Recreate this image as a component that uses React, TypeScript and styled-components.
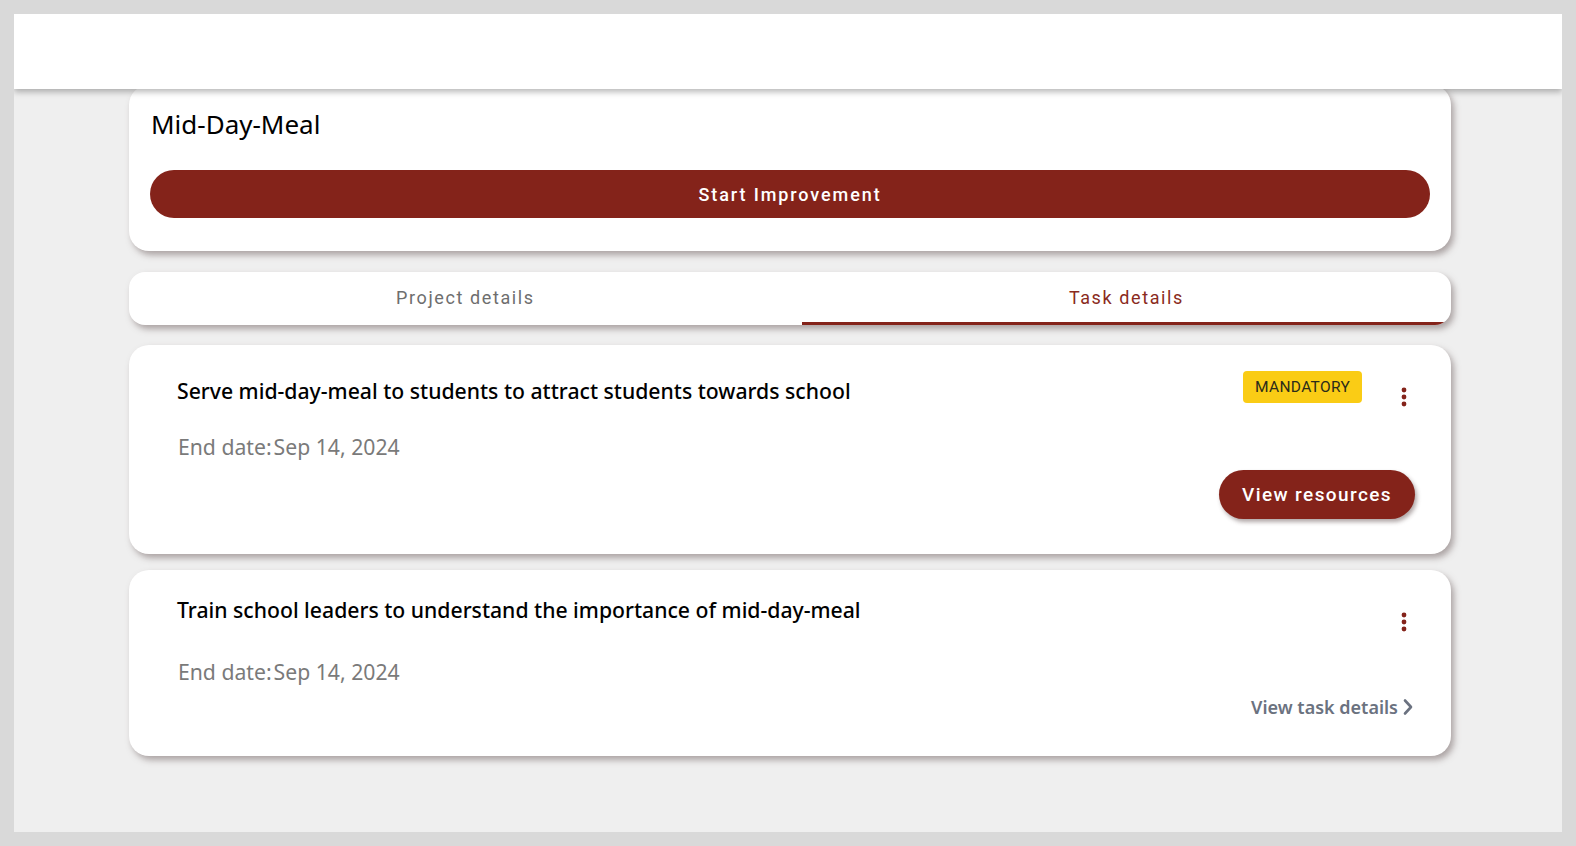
import React from "react";
import styled, { createGlobalStyle } from "styled-components";

const BRAND = "#84231a";

const Global = createGlobalStyle`
  html, body { margin: 0; padding: 0; }
  body {
    background: #d9d9d9;
    font-family: "Noto Sans", "Open Sans", sans-serif;
  }
  * { box-sizing: border-box; }
`;

const Frame = styled.div`
  margin: 14px;
  width: 1548px;
  height: 818px;
  background: #efefef;
  overflow: hidden;
  display: flex;
  flex-direction: column;
`;

const Header = styled.header`
  position: relative;
  z-index: 2;
  height: 75px;
  flex: none;
  background: #ffffff;
  box-shadow: 0 3px 6px rgba(0, 0, 0, 0.28);
`;

const Main = styled.main`
  position: relative;
  z-index: 1;
  width: 1322px;
  margin: -4px 0 0 115px;
  display: flex;
  flex-direction: column;
`;

const Card = styled.section<{ $radius?: number }>`
  background: #ffffff;
  border-radius: ${(p) => p.$radius ?? 20}px;
  box-shadow: 3px 4px 6px rgba(105, 90, 90, 0.5);
`;

const ProjectCard = styled(Card)`
  padding: 21px 21px 33px 21px;
  display: flex;
  flex-direction: column;
`;

const ProjectTitle = styled.h1`
  margin: 0 0 0 1px;
  font-family: "Noto Sans", sans-serif;
  font-weight: 400;
  font-size: 26px;
  line-height: 36px;
  color: #000;
`;

const PrimaryButton = styled.button`
  margin-top: 28px;
  height: 48px;
  width: 100%;
  border: none;
  border-radius: 24px;
  background: ${BRAND};
  color: #fff;
  font-family: Roboto, "Liberation Sans", sans-serif;
  font-weight: 500;
  font-size: 18px;
  letter-spacing: 1.9px;
  cursor: pointer;
`;

const TabBar = styled(Card)`
  margin-top: 21px;
  height: 53px;
  display: flex;
  overflow: hidden;
  border-radius: 16px;
`;

const Tab = styled.button<{ $active?: boolean }>`
  flex: 1 1 auto;
  padding: 0;
  border: none;
  background: transparent;
  font-family: Roboto, "Liberation Sans", sans-serif;
  font-size: 18px;
  letter-spacing: 1.6px;
  color: ${(p) => (p.$active ? "#8a2a20" : "#6e6e6e")};
  border-bottom: 3px solid ${(p) => (p.$active ? BRAND : "transparent")};
  cursor: pointer;
`;

const TaskCard = styled(Card)`
  margin-top: 20px;
  padding: 25px 35px 35px 48px;
  display: flex;
  flex-direction: column;
  & + & {
    margin-top: 16px;
  }
`;

const TaskHead = styled.div`
  height: 62px;
  display: flex;
  align-items: flex-start;
`;

const TaskTitle = styled.h2<{ $offset: number }>`
  flex: 1;
  margin: ${(p) => p.$offset}px 0 0 0;
  font-family: "Noto Sans", sans-serif;
  font-weight: 500;
  font-size: 21.2px;
  line-height: 30px;
  color: #000;
`;

const Badge = styled.span`
  margin-top: 1px;
  height: 32px;
  padding: 0 12px;
  display: inline-flex;
  align-items: center;
  background: #facc15;
  border-radius: 4px;
  font-family: Roboto, "Liberation Sans", sans-serif;
  font-size: 15.5px;
  color: #2b2b1a;
  letter-spacing: 0.3px;
`;

const Kebab = styled.button`
  margin: 15px 0 0 30px;
  width: 24px;
  height: 24px;
  padding: 0;
  border: none;
  background: transparent;
  display: flex;
  align-items: center;
  justify-content: center;
  color: ${BRAND};
  cursor: pointer;
`;

const DateLine = styled.p`
  margin: 0 0 0 1px;
  font-family: "Noto Sans", sans-serif;
  font-size: 21.2px;
  line-height: 30px;
  color: #7a7a7a;
`;

const DateLabel = styled.span`
  margin-right: 2px;
`;

const Footer = styled.div`
  margin-top: 8px;
  display: flex;
  justify-content: flex-end;
  align-items: flex-start;
`;

const ResourceButton = styled.button`
  height: 49px;
  width: 196px;
  margin-right: 1px;
  border: none;
  border-radius: 25px;
  background: ${BRAND};
  color: #fff;
  font-family: Roboto, "Liberation Sans", sans-serif;
  font-weight: 500;
  font-size: 19px;
  letter-spacing: 1.4px;
  box-shadow: 2px 3px 4px rgba(80, 60, 60, 0.45);
  cursor: pointer;
`;

const DetailsLink = styled.a`
  display: inline-flex;
  align-items: center;
  gap: 5px;
  margin: 0 3px 2px 0;
  font-family: "Noto Sans", sans-serif;
  font-weight: 600;
  font-size: 18px;
  line-height: 24px;
  color: #6b7280;
  text-decoration: none;
  cursor: pointer;
`;

const Dots = () => (
  <svg width="6" height="20" viewBox="0 0 6 20" fill="currentColor">
    <circle cx="3" cy="3" r="2.4" />
    <circle cx="3" cy="10" r="2.4" />
    <circle cx="3" cy="17" r="2.4" />
  </svg>
);

const Chevron = () => (
  <svg width="10" height="18" viewBox="0 0 10 18" fill="none" stroke="currentColor" strokeWidth="2.6" strokeLinecap="round" strokeLinejoin="round">
    <path d="M2 2.5 L8 9 L2 15.5" />
  </svg>
);

type Task = {
  title: string;
  date: string;
  mandatory?: boolean;
  action: "resources" | "details";
};

const tasks: Task[] = [
  {
    title: "Serve mid-day-meal to students to attract students towards school",
    date: "Sep 14, 2024",
    mandatory: true,
    action: "resources",
  },
  {
    title: "Train school leaders to understand the importance of mid-day-meal",
    date: "Sep 14, 2024",
    action: "details",
  },
];

export default function App() {
  return (
    <>
      <Global />
      <Frame>
        <Header />
        <Main>
          <ProjectCard>
            <ProjectTitle>Mid-Day-Meal</ProjectTitle>
            <PrimaryButton>Start Improvement</PrimaryButton>
          </ProjectCard>
          <TabBar>
            <Tab>Project details</Tab>
            <Tab $active>Task details</Tab>
          </TabBar>
          {tasks.map((t) => (
            <TaskCard key={t.title}>
              <TaskHead>
                <TaskTitle $offset={t.mandatory ? 6 : 0}>{t.title}</TaskTitle>
                {t.mandatory && <Badge>MANDATORY</Badge>}
                <Kebab aria-label="More">
                  <Dots />
                </Kebab>
              </TaskHead>
              <DateLine>
                <DateLabel>End date:</DateLabel>
                {t.date}
              </DateLine>
              <Footer>
                {t.action === "resources" ? (
                  <ResourceButton>View resources</ResourceButton>
                ) : (
                  <DetailsLink>
                    View task details
                    <Chevron />
                  </DetailsLink>
                )}
              </Footer>
            </TaskCard>
          ))}
        </Main>
      </Frame>
    </>
  );
}
